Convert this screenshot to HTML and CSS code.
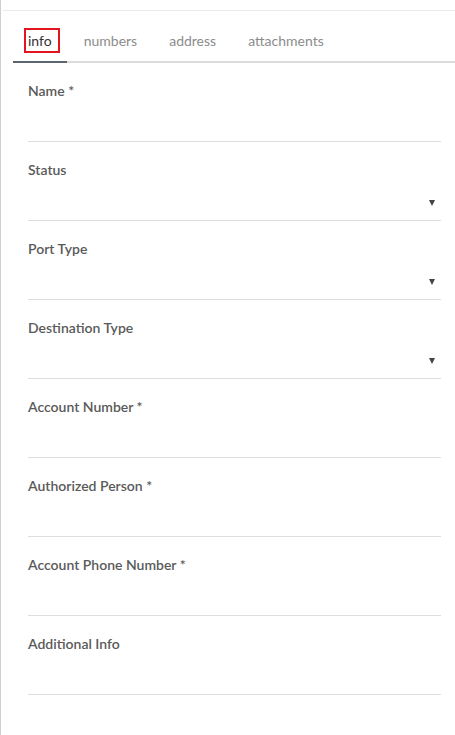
FILE: index.html
```html
<!DOCTYPE html>
<html lang="en">
  <head>
    <meta charset="UTF-8" />
    <meta name="viewport" content="width=device-width, initial-scale=1.0" />
    <link rel="stylesheet" href="styles.css">
    <title>Port request</title>
  </head>
  <body>
    <div class="panel">
      <div class="topline"></div>

      <div class="tabs">
        <div class="tab active"><span class="marked">info</span></div>
        <div class="tab">numbers</div>
        <div class="tab">address</div>
        <div class="tab">attachments</div>
      </div>

      <form class="form">
        <div class="field">
          <label>Name *</label>
          <div class="control"></div>
        </div>
        <div class="field">
          <label>Status</label>
          <div class="control select"><span class="caret"></span></div>
        </div>
        <div class="field">
          <label>Port Type</label>
          <div class="control select"><span class="caret"></span></div>
        </div>
        <div class="field">
          <label>Destination Type</label>
          <div class="control select"><span class="caret"></span></div>
        </div>
        <div class="field">
          <label>Account Number *</label>
          <div class="control"></div>
        </div>
        <div class="field">
          <label>Authorized Person *</label>
          <div class="control"></div>
        </div>
        <div class="field">
          <label>Account Phone Number *</label>
          <div class="control"></div>
        </div>
        <div class="field">
          <label>Additional Info</label>
          <div class="control"></div>
        </div>
      </form>
    </div>
  </body>
</html>
```

FILE: styles.css
```css
body {
  margin: 0;
  font-family: Lato, "Liberation Sans", sans-serif;
  background: #fff;
}
.panel {
  border-left: 1px solid #cfcfcf;
  min-height: 100vh;
  padding-top: 10px;
  box-sizing: border-box;
}
.topline {
  margin-left: 2px;
  border-top: 1px solid #ebebeb;
}
.tabs {
  display: flex;
  gap: 2px;
  margin: 20px 0 0 12px;
  border-bottom: 2px solid #dcdcdc;
}
.tab {
  padding: 0 15px 10px;
  font-size: 14px;
  line-height: 20px;
  color: #8c8c8c;
}
.tab.active {
  color: #333;
  border-bottom: 2px solid #5b6570;
  margin-bottom: -2px;
}
.marked {
  outline: 2px solid #e3161f;
  outline-offset: 2px;
  padding-right: 4px;
  margin-right: -4px;
}
.form {
  padding: 19px 14px 0 27px;
}
.field {
  margin-bottom: 19px;
  border-bottom: 1px solid #dedede;
}
label {
  display: block;
  font-size: 14px;
  line-height: 18px;
  font-weight: 600;
  color: #5a5a5a;
}
.control {
  height: 41px;
  display: flex;
  align-items: center;
  justify-content: flex-end;
}
.caret {
  width: 0;
  height: 0;
  margin: 6px 6px 0 0;
  border-left: 3.5px solid transparent;
  border-right: 3.5px solid transparent;
  border-top: 6px solid #444;
}
```
